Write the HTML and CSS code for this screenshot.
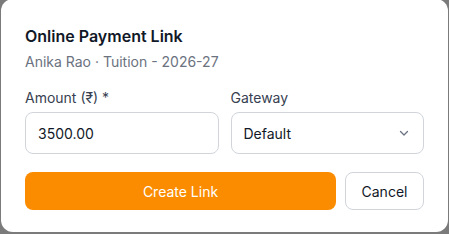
FILE: index.html
```html
<!DOCTYPE html>
<html>
<head>
<meta charset="utf-8">
<link rel="stylesheet" href="styles.css">
</head>
<body>
<div class="dialog">
  <h2 class="title">Online Payment Link</h2>
  <p class="subtitle">Anika Rao · Tuition - 2026-27</p>
  <div class="fields">
    <div class="field">
      <label class="label">Amount (₹) *</label>
      <div class="input">3500.00</div>
    </div>
    <div class="field">
      <label class="label">Gateway</label>
      <div class="input select">
        <span>Default</span>
        <svg class="chev" width="12" height="12" viewBox="0 0 12 12"><path d="M2.5 4.5 L6 8 L9.5 4.5" fill="none" stroke="#6b7280" stroke-width="1.3" stroke-linecap="round" stroke-linejoin="round"/></svg>
      </div>
    </div>
  </div>
  <div class="actions">
    <button class="btn primary">Create Link</button>
    <button class="btn secondary">Cancel</button>
  </div>
</div>
</body>
</html>
```
FILE: styles.css
```css
* { box-sizing: border-box; }
html, body { margin: 0; padding: 0; }
body {
  background: #7b7b7b;
  width: 449px;
  height: 234px;
  overflow: hidden;
  font-family: Inter, "Noto Sans", sans-serif;
}
.dialog {
  margin: -1px 0 0 1px;
  width: 447px;
  height: 233px;
  background: #ffffff;
  border-radius: 12px;
  padding: 25px 24px 24px 24px;
}
.title {
  margin: 0;
  font-size: 16px;
  line-height: 24px;
  font-weight: 600;
  color: #111827;
}
.subtitle {
  margin: 4px 0 0 0;
  font-size: 14px;
  line-height: 20px;
  color: #6b7280;
}
.fields {
  margin-top: 16px;
  display: grid;
  grid-template-columns: 1fr 1fr;
  gap: 12px;
}
.field { display: flex; flex-direction: column; }
.label {
  font-size: 14px;
  line-height: 20px;
  color: #374151;
  margin-bottom: 4px;
}
.input {
  height: 42px;
  border: 1px solid #d1d5db;
  border-radius: 8px;
  padding: 0 12px;
  display: flex;
  align-items: center;
  font-size: 14px;
  color: #111827;
}
.select { justify-content: space-between; padding-right: 13px; }
.chev { display: block; }
.actions {
  margin-top: 18px;
  display: flex;
  gap: 9px;
}
.btn {
  height: 38px;
  border-radius: 8px;
  font-family: Inter, "Noto Sans", sans-serif;
  font-size: 14px;
  cursor: pointer;
}
.primary {
  flex: 1;
  background: #fb8c00;
  color: #ffffff;
  border: none;
}
.secondary {
  width: 79px;
  background: #ffffff;
  color: #111827;
  border: 1px solid #d1d5db;
}
```
